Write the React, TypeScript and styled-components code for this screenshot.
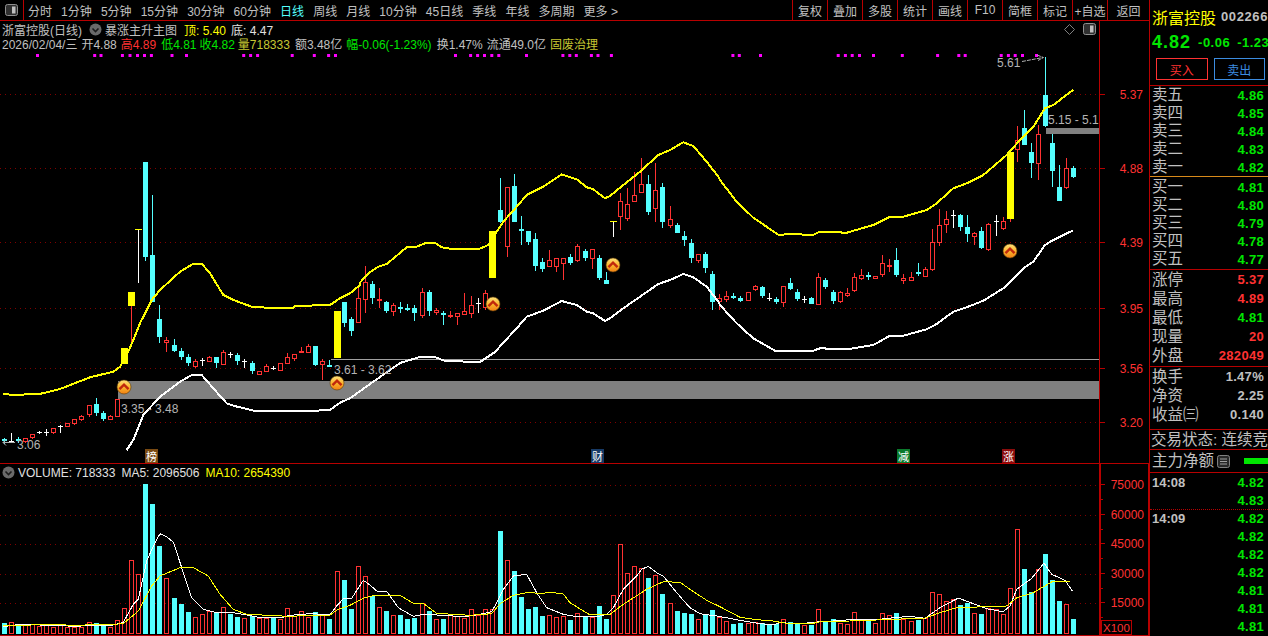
import React from 'react'
import styled, { createGlobalStyle } from 'styled-components'

const RED_LINE = '#b80000'
const UP = '#ff3232'
const DOWN = '#54ffff'
const GREEN = '#00e600'
const GRAY = '#c0c0c0'
const YELLOW = '#ffff00'
const FONT = '"Liberation Sans", "Noto Sans CJK SC", sans-serif'

const STEP = 7.086
const barX = (i: number) => 3.5 + STEP * i

type Kind = 'r' | 'c' | 'w' | 'y' | 't'
type Row = [Kind, number, number, number, number]

// 3x crop readings, y = offset + value / 3
const scan = (offset: number, rows: Row[]): Row[] =>
    rows.map(([k, a, b, c, d]) => [k, offset + a / 3, offset + b / 3, offset + c / 3, offset + d / 3])

const candles: Row[] = [
    ...scan(260, [
        ['c', 538, 544, 533, 552], ['w', 543, 543, 520, 545], ['c', 537, 539, 530, 548], ['r', 533, 543, 533, 550],
        ['r', 521, 531, 521, 538], ['w', 518, 518, 512, 522], ['w', 518, 518, 507, 527], ['r', 503, 515, 503, 523],
        ['w', 500, 500, 494, 518], ['r', 488, 497, 488, 497], ['r', 476, 488, 476, 495], ['r', 469, 478, 465, 482],
        ['r', 436, 464, 436, 472], ['c', 433, 458, 414, 467], ['c', 459, 477, 452, 483], ['r', 469, 478, 465, 480],
        ['r', 418, 470, 418, 472], ['y', 264, 312, 264, 312], ['y', 96, 138, 96, 262],
    ]),
    ...scan(60, [
        ['t', 511, 511, 511, 669], ['c', 306, 590, 306, 603], ['c', 585, 726, 405, 726],
    ]),
    ...scan(260, [
        ['c', 178, 230, 136, 250], ['r', 240, 247, 230, 276], ['c', 255, 273, 238, 275], ['c', 273, 290, 265, 300],
        ['c', 291, 309, 283, 318], ['r', 303, 318, 296, 325], ['w', 302, 302, 295, 318], ['r', 292, 303, 288, 307],
        ['c', 291, 309, 291, 323], ['r', 276, 312, 270, 315], ['w', 283, 283, 275, 295], ['c', 285, 303, 280, 315],
        ['w', 305, 305, 298, 325], ['c', 309, 332, 303, 342], ['r', 334, 344, 334, 344], ['r', 319, 334, 312, 337],
        ['w', 324, 324, 317, 331], ['r', 310, 330, 310, 330], ['r', 291, 310, 280, 312], ['r', 283, 295, 283, 303],
        ['r', 275, 275, 262, 280], ['r', 258, 275, 252, 280], ['c', 258, 315, 258, 318], ['r', 304, 312, 296, 360],
        ['c', 316, 316, 300, 316], ['y', 152, 293, 152, 293], ['c', 127, 190, 127, 200], ['c', 178, 213, 172, 228],
        ['r', 115, 186, 85, 190],
    ]),
    ...scan(140, [
        ['r', 425, 475, 378, 518], ['c', 432, 473, 422, 492], ['r', 477, 477, 444, 505], ['c', 487, 513, 483, 518],
        ['r', 496, 515, 490, 527], ['c', 503, 503, 487, 518], ['c', 505, 510, 492, 514], ['c', 504, 518, 495, 542],
        ['r', 457, 527, 445, 535], ['c', 456, 513, 450, 527], ['r', 511, 516, 504, 525], ['c', 520, 523, 513, 555],
        ['r', 526, 526, 513, 535], ['r', 520, 528, 520, 555], ['r', 512, 520, 460, 520], ['r', 496, 520, 468, 533],
        ['w', 490, 490, 475, 518], ['r', 460, 503, 450, 510], ['y', 273, 413, 273, 413], ['c', 210, 247, 113, 250],
        ['r', 142, 319, 142, 350], ['c', 138, 246, 102, 246], ['c', 267, 267, 228, 314], ['c', 273, 305, 273, 315],
        ['c', 297, 377, 280, 392], ['c', 366, 387, 354, 395], ['r', 361, 379, 330, 380], ['r', 355, 380, 355, 395],
        ['r', 355, 371, 355, 420], ['c', 351, 369, 342, 376], ['r', 319, 361, 312, 365], ['c', 333, 354, 327, 364],
        ['r', 328, 356, 328, 387], ['c', 354, 413, 345, 420], ['c', 420, 431, 397, 431], ['t', 247, 247, 247, 290],
        ['r', 184, 230, 158, 270], ['r', 193, 236, 145, 243], ['r', 166, 185, 97, 185], ['r', 133, 158, 55, 158],
        ['c', 132, 216, 105, 225], ['r', 151, 206, 70, 245], ['c', 141, 246, 130, 264], ['r', 238, 257, 198, 263],
        ['c', 255, 278, 248, 278], ['c', 288, 300, 273, 318], ['c', 309, 354, 298, 368], ['r', 343, 362, 343, 368],
        ['c', 342, 384, 336, 400], ['c', 402, 485, 394, 510], ['r', 475, 484, 463, 510],
    ]),
    ...scan(40, [
        ['r', 768, 778, 754, 785], ['c', 769, 773, 760, 777], ['c', 774, 783, 767, 787], ['r', 757, 780, 755, 783],
        ['r', 739, 748, 735, 752], ['c', 741, 768, 738, 773], ['w', 774, 774, 760, 783], ['c', 778, 787, 770, 792],
        ['r', 739, 787, 737, 800], ['c', 730, 747, 714, 750], ['c', 756, 777, 748, 783], ['w', 778, 778, 768, 788],
        ['c', 775, 792, 770, 793], ['r', 712, 793, 700, 795], ['c', 721, 741, 715, 748], ['c', 756, 783, 750, 792],
        ['r', 757, 784, 752, 790], ['r', 760, 767, 745, 772], ['r', 712, 751, 700, 755], ['r', 705, 713, 688, 720],
        ['c', 707, 707, 695, 720], ['r', 707, 712, 707, 712], ['r', 670, 703, 645, 710], ['r', 677, 677, 658, 695],
        ['c', 660, 705, 625, 710], ['r', 715, 722, 702, 732], ['r', 712, 722, 697, 722], ['c', 698, 698, 670, 708],
        ['r', 688, 708, 682, 710], ['r', 607, 689, 568, 692], ['r', 556, 608, 508, 617], ['r', 538, 553, 514, 580],
        ['w', 525, 525, 511, 563], ['c', 525, 561, 522, 573], ['c', 561, 581, 526, 606], ['r', 580, 590, 576, 615],
        ['c', 573, 625, 562, 627], ['r', 552, 627, 550, 632], ['w', 543, 543, 525, 587], ['r', 544, 565, 530, 570],
        ['y', 337, 537, 337, 545], ['r', 300, 326, 258, 365], ['c', 265, 315, 210, 315], ['c', 336, 369, 308, 414],
        ['r', 283, 369, 256, 420], ['c', 165, 257, 52, 262], ['c', 309, 392, 282, 441], ['c', 442, 483, 375, 483],
        ['r', 385, 441, 354, 447], ['c', 384, 411, 378, 413],
    ]),
]

const volumeBars: ['c' | 'r', number][] = [
    ['c', 485], ['r', 484], ['c', 490], ['r', 490], ['r', 490], ['r', 495], ['r', 490], ['r', 498], ['r', 492], ['r', 497],
    ['r', 498], ['r', 498], ['r', 484], ['c', 487], ['c', 493], ['r', 498], ['r', 478], ['r', 442], ['r', 298], ['r', 340],
    ['c', 69], ['c', 129], ['c', 255], ['r', 352], ['c', 411], ['c', 429], ['c', 453], ['r', 469], ['r', 460], ['r', 451],
    ['c', 457], ['r', 439], ['c', 459], ['c', 468], ['r', 472], ['c', 465], ['r', 470], ['r', 470], ['c', 472], ['r', 474],
    ['r', 442], ['r', 466], ['r', 451], ['r', 468], ['c', 454], ['r', 463], ['c', 474], ['r', 331], ['c', 357], ['c', 444],
    ['r', 316], ['r', 346], ['c', 406], ['r', 439], ['c', 450], ['r', 463], ['c', 462], ['c', 474], ['c', 471], ['r', 427],
    ['c', 451], ['r', 475], ['c', 474], ['r', 463], ['r', 466], ['r', 470], ['r', 445], ['r', 463], ['r', 445], ['r', 445],
    ['c', 210], ['r', 298], ['c', 330], ['c', 408], ['c', 444], ['c', 438], ['c', 465], ['r', 463], ['r', 469], ['r', 466],
    ['c', 477], ['r', 457], ['c', 465], ['r', 469], ['c', 435], ['c', 474], ['r', 403], ['r', 250], ['r', 337], ['r', 316],
    ['r', 322], ['c', 351], ['r', 342], ['c', 399], ['r', 427], ['c', 450], ['c', 456], ['c', 459], ['r', 475], ['c', 462],
    ['c', 447], ['r', 469], ['r', 481], ['c', 490], ['c', 486], ['r', 486], ['r', 484], ['c', 487], ['c', 491], ['c', 490],
    ['r', 475], ['c', 483], ['c', 489], ['r', 492], ['c', 491], ['r', 445], ['c', 484], ['c', 474], ['r', 486], ['r', 490],
    ['r', 454], ['r', 478], ['c', 478], ['r', 486], ['r', 457], ['r', 463], ['c', 456], ['r', 475], ['r', 481], ['c', 477],
    ['r', 472], ['r', 393], ['r', 400], ['r', 421], ['r', 415], ['c', 432], ['c', 425], ['r', 457], ['c', 459], ['r', 442],
    ['r', 445], ['r', 460], ['r', 381], ['r', 205], ['c', 324], ['c', 393], ['r', 325], ['c', 279], ['c', 357], ['c', 420],
    ['r', 430], ['c', 474],
]

type P = [number, number]
const path = (ox: number, oy: number, list: P[]) =>
    list.map(([x, y]) => `${(ox + x / 3).toFixed(1)},${(oy + y / 3).toFixed(1)}`).join(' ')

const upperBand = [
    path(0, 260, [[10, 401], [30, 404], [115, 403], [180, 387], [270, 352], [340, 335], [360, 320], [385, 275], [400, 240], [420, 190], [455, 120], [480, 90], [540, 35], [580, 11], [605, 11], [630, 40], [670, 105], [700, 120], [755, 140], [800, 143], [880, 143], [885, 138], [990, 135], [1020, 115], [1050, 100], [1080, 75]]),
    path(360, 140, [[0, 428], [25, 400], [55, 380], [80, 372], [140, 322], [170, 320], [200, 308], [225, 308], [245, 322], [280, 328], [355, 328], [385, 315], [400, 290], [430, 245], [470, 200], [500, 165], [550, 140], [605, 103], [650, 118], [680, 142], [700, 148], [735, 175], [750, 168], [790, 135], [840, 95], [895, 45], [930, 30], [970, 7], [1000, 18], [1040, 65], [1075, 110]]),
    path(720, 40, [[0, 420], [50, 485], [100, 533], [175, 584], [210, 583], [280, 584], [300, 575], [380, 578], [460, 555], [510, 530], [550, 530], [620, 510], [650, 490], [700, 445], [740, 430], [790, 405], [860, 345], [900, 300], [940, 260], [975, 205], [1000, 195], [1060, 149]]),
].join(' ')

const lowerBand = [
    path(0, 260, [[380, 570], [400, 540], [430, 465], [480, 410], [540, 365], [575, 345], [605, 345], [640, 385], [680, 430], [700, 437], [765, 453], [925, 453], [990, 450], [1020, 428], [1050, 415], [1110, 372]]),
    '400,363 420,357 435,357 445,361 480,362 495,352',
    path(360, 140, [[440, 597], [470, 565], [500, 530], [550, 512], [605, 483], [650, 495], [680, 515], [700, 520], [735, 543], [750, 535], [790, 505], [840, 470], [895, 432], [930, 420], [970, 402], [1000, 412], [1040, 440], [1075, 485]]),
    path(720, 40, [[0, 795], [50, 850], [100, 895], [165, 932], [280, 932], [300, 925], [380, 928], [460, 915], [510, 887], [550, 887], [620, 868], [650, 852], [700, 815], [740, 802], [790, 782], [850, 745], [910, 685], [940, 665], [975, 615], [1000, 600], [1060, 571]]),
].join(' ')

const ma5 = [
    path(0, 460, [[10, 497], [60, 490], [100, 490], [140, 494], [180, 492], [220, 497], [280, 492], [340, 492], [370, 484], [400, 430], [415, 415], [440, 300], [460, 255], [480, 218], [500, 228], [520, 243], [545, 320], [575, 410], [610, 445], [650, 455], [700, 455], [740, 462], [770, 468], [810, 470], [845, 470], [860, 465], [900, 460], [940, 458], [990, 462], [1010, 435], [1030, 413], [1055, 412], [1090, 358]]),
    path(370, 460, [[0, 372], [20, 390], [50, 391], [85, 440], [130, 466], [160, 460], [240, 464], [280, 468], [330, 460], [365, 452], [380, 425], [400, 385], [430, 345], [470, 340], [500, 395], [530, 440], [580, 460], [620, 467], [680, 467], [710, 460], [730, 440], [760, 385], [800, 345], [815, 325], [835, 316], [860, 335], [880, 345], [920, 395], [960, 440], [990, 458], [1040, 465]]),
    path(740, 460, [[0, 478], [30, 483], [60, 488], [100, 491], [120, 485], [180, 488], [230, 483], [280, 480], [330, 476], [410, 476], [460, 470], [510, 466], [555, 472], [600, 440], [655, 411], [700, 428], [740, 443], [790, 452], [810, 435], [830, 385], [875, 352], [912, 306], [935, 340], [975, 358], [997, 390]]),
].join(' ')

const ma10 = [
    path(0, 460, [[10, 495], [150, 490], [220, 493], [340, 490], [370, 488], [415, 450], [455, 375], [480, 345], [540, 320], [580, 320], [625, 345], [660, 400], [700, 445], [740, 460], [830, 464], [860, 466], [990, 462], [1015, 445], [1050, 433], [1090, 412]]),
    path(370, 460, [[0, 406], [20, 403], [90, 403], [130, 427], [160, 427], [200, 457], [300, 463], [365, 458], [390, 428], [430, 403], [470, 395], [520, 397], [540, 394], [580, 399], [600, 425], [660, 462], [720, 460], [760, 430], [830, 385], [880, 362], [930, 364], [960, 385], [1010, 418], [1050, 437]]),
    path(740, 460, [[0, 469], [50, 476], [100, 480], [120, 484], [150, 488], [220, 487], [240, 482], [330, 480], [410, 477], [555, 471], [600, 455], [650, 440], [740, 437], [800, 435], [830, 410], [880, 395], [940, 360], [990, 360]]),
].join(' ')

const magentaDots = [
    37.5, 94.7, 101, 122.4, 130, 137.5, 144.5, 151.4, 172, 186.5, 243.7, 250.6, 257.6, 292.2, 314.3, 328.6, 335.5, 455.5,
    470.6, 477.6, 484.5, 491.8, 498.8, 526.5, 562.9, 569.8, 576.3, 591.4, 598, 611.4, 732.9, 739.3, 760.5, 838.2, 845.4,
    852.2, 859.5, 873.5, 902.3, 937.6, 958.8, 965.2, 1001.2, 1008.4, 1015.2, 1022.5, 1036.5,
]

const priceGrid = [
    { y: 94, label: '5.37' }, { y: 168, label: '4.88' }, { y: 242, label: '4.39' },
    { y: 308, label: '3.95' }, { y: 368, label: '3.56' }, { y: 422, label: '3.20' },
]
const volumeGrid = [
    { y: 484, label: '75000' }, { y: 514, label: '60000' }, { y: 543, label: '45000' },
    { y: 573, label: '30000' }, { y: 602, label: '15000' },
]
const signals: P[] = [[124, 387], [337, 383], [493, 304], [613, 265], [1010, 251]]
const tags = [
    { x: 145, text: '榜', color: '#7a4a12' }, { x: 591, text: '财', color: '#173a66' },
    { x: 897, text: '减', color: '#0a7a2c' }, { x: 1002, text: '涨', color: '#8a0c0c' },
]

const periods = ['分时', '1分钟', '5分钟', '15分钟', '30分钟', '60分钟', '日线', '周线', '月线', '10分钟', '45日线', '季线', '年线', '多周期', '更多 >']
const tools = ['复权', '叠加', '多股', '统计', '画线', 'F10', '简框', '标记', '+自选', '返回']

const sells = [['卖五', '4.86'], ['卖四', '4.85'], ['卖三', '4.84'], ['卖二', '4.83'], ['卖一', '4.82']]
const buys = [['买一', '4.81'], ['买二', '4.80'], ['买三', '4.79'], ['买四', '4.78'], ['买五', '4.77']]
const limits = [
    ['涨停', '5.37', UP], ['最高', '4.89', UP], ['最低', '4.81', GREEN], ['现量', '20', UP], ['外盘', '282049', UP],
]
const stats = [['换手', '1.47%'], ['净资', '2.25'], ['收益㈢', '0.140']]
const ticks = [
    ['14:08', '4.82'], ['', '4.83'], ['14:09', '4.82'], ['', '4.82'], ['', '4.82'],
    ['', '4.82'], ['', '4.81'], ['', '4.81'], ['', '4.81'],
]

const PanelToggleIcon = () => (
    <svg width="13" height="12" viewBox="0 0 13 12">
        <rect x="0.5" y="0.5" width="12" height="11" rx="2" fill="#303030" stroke="#909090" />
        <rect x="7" y="2.5" width="3.5" height="7" fill="#c0c0c0" />
    </svg>
)

const CollapseIcon = () => (
    <svg width="13" height="13" viewBox="0 0 13 13">
        <circle cx="6.5" cy="6.5" r="6" fill="#6a6a6a" />
        <path d="M3.5 5.5 L6.5 8.5 L9.5 5.5" fill="none" stroke="#1c1c1c" strokeWidth="1.6" />
    </svg>
)

const DiamondIcon = () => (
    <svg width="11" height="11" viewBox="0 0 11 11">
        <path d="M5.5 0.5 L10.5 5.5 L5.5 10.5 L0.5 5.5 Z" fill="none" stroke="#808080" />
    </svg>
)

const ListIcon = () => (
    <svg width="13" height="13" viewBox="0 0 13 13">
        <rect x="0.5" y="0.5" width="12" height="12" rx="2" fill="#282828" stroke="#808080" />
        <path d="M3 4 H10 M3 6.5 H10 M3 9 H10" stroke="#a0a0a0" />
    </svg>
)

const Candle = ({ row, i }: { row: Row; i: number }) => {
    const [kind, top, bottom, wickTop, wickBottom] = row
    const x = Math.round(barX(i))
    if (kind === 'y') {
        return (
            <g>
                <line x1={x + 0.5} x2={x + 0.5} y1={top} y2={wickBottom} stroke={UP} />
                <rect x={x - 3} y={top} width={7} height={bottom - top} fill={YELLOW} />
            </g>
        )
    }
    if (kind === 't') {
        return (
            <g>
                <line x1={x + 0.5} x2={x + 0.5} y1={wickTop} y2={wickBottom} stroke="#ffffff" />
                <rect x={x - 3} y={top - 1} width={7} height={1} fill={YELLOW} />
            </g>
        )
    }
    const color = kind === 'r' ? UP : kind === 'c' ? DOWN : '#ffffff'
    const flat = bottom - top < 1.5
    return (
        <g>
            <line x1={x + 0.5} x2={x + 0.5} y1={wickTop} y2={wickBottom} stroke={color} />
            {flat ? (
                <rect x={x - 2} y={top - 0.5} width={5} height={kind === 'w' ? 1 : 2} fill={color} />
            ) : kind === 'r' ? (
                <rect x={x - 2 + 0.5} y={Math.round(top) + 0.5} width={4} height={Math.round(bottom - top)} fill="#000" stroke={UP} />
            ) : (
                <rect x={x - 2} y={top} width={5} height={bottom - top} fill={color} />
            )}
        </g>
    )
}

const SignalBadge = ({ x, y }: { x: number; y: number }) => (
    <g>
        <circle cx={x} cy={y} r={7} fill="url(#badge)" stroke="#5a3a08" strokeWidth="0.6" />
        <path d={`M${x - 4.5} ${y + 2.2} L${x} ${y - 2.4} L${x + 4.5} ${y + 2.2}`} fill="none" stroke="#c0280c" strokeWidth="2.4" />
    </g>
)

const App = () => {
    return (
        <>
            <GlobalStyle />
            <Shell>
                <Workspace>
                    <Toolbar>
                        <ToggleCell><PanelToggleIcon /></ToggleCell>
                        <Periods>
                            {periods.map((p) => (
                                <PeriodItem key={p} $active={p === '日线'}>{p}</PeriodItem>
                            ))}
                        </Periods>
                        <Tools>
                            {tools.map((t) => (
                                <ToolItem key={t}>{t}</ToolItem>
                            ))}
                        </Tools>
                    </Toolbar>

                    <MainRow>
                        <ChartColumn>
                            <TitleRow>
                                <Field>浙富控股(日线)</Field>
                                <IconSlot><CollapseIcon /></IconSlot>
                                <Field>暴涨主升主图</Field>
                                <Field $color={YELLOW} $gap={7}>顶: 5.40</Field>
                                <Field $color="#e0e0e0" $gap={5}>底: 4.47</Field>
                                <TitleIcons>
                                    <DiamondIcon />
                                    <PanelToggleIcon />
                                </TitleIcons>
                            </TitleRow>
                            <QuoteRow>
                                <Field>2026/02/04/三</Field>
                                <Field $gap={4}>开4.88</Field>
                                <Field $color={UP} $gap={4}>高4.89</Field>
                                <Field $color={GREEN} $gap={5}>低4.81</Field>
                                <Field $color={GREEN} $gap={3}>收4.82</Field>
                                <Field $color="#c8c832" $gap={3}>量718333</Field>
                                <Field $gap={5}>额3.48亿</Field>
                                <Field $color={GREEN} $gap={4}>幅-0.06(-1.23%)</Field>
                                <Field $gap={5}>换1.47%</Field>
                                <Field $gap={4}>流通49.0亿</Field>
                                <Field $color="#c8c832" $gap={4}>固废治理</Field>
                            </QuoteRow>
                            <PriceChart width={1099} height={414} viewBox="0 49 1099 414">
                                <defs>
                                    <linearGradient id="badge" x1="0" y1="0" x2="0" y2="1">
                                        <stop offset="0" stopColor="#ffe27a" />
                                        <stop offset="0.5" stopColor="#fbb52e" />
                                        <stop offset="1" stopColor="#f07f12" />
                                    </linearGradient>
                                </defs>
                                {priceGrid.map((g) => (
                                    <GridLine key={g.y} x1={0} x2={1099} y1={g.y + 0.5} y2={g.y + 0.5} />
                                ))}
                                {magentaDots.map((x) => (
                                    <rect key={x} x={x - 1.5} y={54} width={3} height={3} fill="#ff00ff" />
                                ))}
                                <rect x={118} y={381} width={981} height={18} fill="#808080" />
                                <rect x={1046} y={128} width={53} height={6} fill="#808080" />
                                <line x1={331} x2={1099} y1={359.5} y2={359.5} stroke="#a0a0a0" />
                                <g shapeRendering="crispEdges">
                                    {candles.map((row, i) => (
                                        <Candle key={i} row={row} i={i} />
                                    ))}
                                    <polyline points={upperBand} fill="none" stroke={YELLOW} strokeWidth="2" />
                                    <polyline points={lowerBand} fill="none" stroke="#ffffff" strokeWidth="2" />
                                </g>
                                {signals.map(([x, y]) => (
                                    <SignalBadge key={x} x={x} y={y} />
                                ))}
                                <ChartLabel x={121} y={413}>3.35 - 3.48</ChartLabel>
                                <ChartLabel x={334} y={374}>3.61 - 3.62</ChartLabel>
                                <ChartLabel x={1048} y={124}>5.15 - 5.1</ChartLabel>
                                <ChartLabel x={997} y={67}>5.61</ChartLabel>
                                <ChartLabel x={17} y={449}>3.06</ChartLabel>
                                <path d="M1022 61.5 L1043 57.5 M1037 55 L1043.5 57.5 L1038 60.5" fill="none" stroke="#b0b0b0" strokeDasharray="4 1" />
                                <path d="M15 442.5 L3 442.5 M6 439.5 L3 442.5 L6 445.5" fill="none" stroke="#b0b0b0" />
                                {tags.map((t) => (
                                    <g key={t.x}>
                                        <rect x={t.x} y={449} width={13} height={14} fill={t.color} />
                                        <TagText x={t.x + 6.5} y={460.5}>{t.text}</TagText>
                                    </g>
                                ))}
                            </PriceChart>
                        </ChartColumn>
                        <AxisColumn>
                            <svg width="49" height="442" viewBox="1100 21 49 442">
                                {priceGrid.map((g) => (
                                    <g key={g.y}>
                                        <line x1={1100} x2={1105} y1={g.y + 0.5} y2={g.y + 0.5} stroke={RED_LINE} />
                                        <AxisLabel x={1143} y={g.y + 5}>{g.label}</AxisLabel>
                                    </g>
                                ))}
                            </svg>
                        </AxisColumn>
                    </MainRow>

                    <VolumeRow>
                        <ChartColumn>
                            <VolumeHeader>
                                <CollapseIcon />
                                <VolumeText>VOLUME: 718333</VolumeText>
                                <VolumeText $gap={6}>MA5: 2096506</VolumeText>
                                <VolumeText $gap={6} $color={YELLOW}>MA10: 2654390</VolumeText>
                            </VolumeHeader>
                            <svg width="1099" height="154" viewBox="0 480 1099 154">
                                {volumeGrid.map((g) => (
                                    <GridLine key={g.y} x1={0} x2={1099} y1={g.y + 0.5} y2={g.y + 0.5} />
                                ))}
                                <g shapeRendering="crispEdges">
                                    {volumeBars.map(([kind, top], i) => {
                                        const x = Math.round(barX(i)) - 2
                                        const y = Math.round(460 + top / 3)
                                        return kind === 'c' ? (
                                            <rect key={i} x={x} y={y} width={5} height={633 - y} fill={DOWN} />
                                        ) : (
                                            <rect key={i} x={x + 0.5} y={y + 0.5} width={4} height={632 - y} fill="none" stroke={UP} />
                                        )
                                    })}
                                    <polyline points={ma5} fill="none" stroke="#ffffff" />
                                    <polyline points={ma10} fill="none" stroke={YELLOW} />
                                </g>
                            </svg>
                        </ChartColumn>
                        <VolumeAxis>
                            <svg width="47" height="171" viewBox="1101 464 47 171">
                                {volumeGrid.map((g) => (
                                    <g key={g.y}>
                                        <line x1={1101} x2={1105} y1={g.y + 0.5} y2={g.y + 0.5} stroke={RED_LINE} />
                                        <line x1={1101} x2={1103} y1={g.y + 15.5} y2={g.y + 15.5} stroke={RED_LINE} />
                                        <AxisLabel x={1144} y={g.y + 5}>{g.label}</AxisLabel>
                                    </g>
                                ))}
                                <rect x={1101.5} y={620.5} width={30} height={14} fill="none" stroke={RED_LINE} />
                                <ScaleLabel x={1103} y={632}>X100</ScaleLabel>
                            </svg>
                        </VolumeAxis>
                    </VolumeRow>
                </Workspace>

                <SidePanel>
                    <NameRow>
                        <StockName>浙富控股</StockName>
                        <StockCode>002266</StockCode>
                    </NameRow>
                    <PriceRow>
                        <LastPrice>4.82</LastPrice>
                        <Change>-0.06</Change>
                        <Change>-1.23</Change>
                    </PriceRow>
                    <TradeButtons>
                        <TradeButton $color={UP}>买入</TradeButton>
                        <TradeButton $color="#3c8ce0">卖出</TradeButton>
                    </TradeButtons>

                    <Section $height={91}>
                        {sells.map(([name, value]) => (
                            <QuoteLine key={name}>
                                <QuoteName>{name}</QuoteName>
                                <QuoteValue $color={GREEN}>{value}</QuoteValue>
                            </QuoteLine>
                        ))}
                    </Section>
                    <Section $height={93} $color="#d88a1a" $pad={1}>
                        {buys.map(([name, value]) => (
                            <QuoteLine key={name}>
                                <QuoteName>{name}</QuoteName>
                                <QuoteValue $color={GREEN}>{value}</QuoteValue>
                            </QuoteLine>
                        ))}
                    </Section>
                    <Section $height={97}>
                        {limits.map(([name, value, color]) => (
                            <QuoteLine key={name} $height={19}>
                                <QuoteName>{name}</QuoteName>
                                <QuoteValue $color={color}>{value}</QuoteValue>
                            </QuoteLine>
                        ))}
                    </Section>
                    <Section $height={63}>
                        {stats.map(([name, value]) => (
                            <QuoteLine key={name} $height={19}>
                                <QuoteName>{name}</QuoteName>
                                <QuoteValue $color={GRAY}>{value}</QuoteValue>
                            </QuoteLine>
                        ))}
                    </Section>
                    <Section $height={20}>
                        <StatusText>交易状态: 连续竞</StatusText>
                    </Section>
                    <Section $height={23}>
                        <NetRow>
                            <QuoteName>主力净额</QuoteName>
                            <ListIcon />
                            <NetBar />
                        </NetRow>
                    </Section>
                    <Section $height={163}>
                        {ticks.map(([time, value], i) => (
                            <TickLine key={i} $dotted={i === 2}>
                                <TickTime>{time}</TickTime>
                                <QuoteValue $color={GREEN}>{value}</QuoteValue>
                            </TickLine>
                        ))}
                    </Section>
                </SidePanel>
            </Shell>
        </>
    )
}

const GlobalStyle = createGlobalStyle`
    html, body {
        margin: 0;
        padding: 0;
        background: #000;
    }
    * {
        box-sizing: border-box;
    }
    svg {
        display: block;
    }
`

const Shell = styled.div`
    display: flex;
    width: 1268px;
    height: 636px;
    overflow: hidden;
    background: #000;
    color: ${GRAY};
    font-family: ${FONT};
    font-size: 12px;
    white-space: nowrap;
`

const Workspace = styled.div`
    display: flex;
    flex-direction: column;
    width: 1149px;
    flex: none;
`

const Toolbar = styled.div`
    display: flex;
    align-items: stretch;
    height: 21px;
    flex: none;
    border-bottom: 1px solid ${RED_LINE};
`

const ToggleCell = styled.div`
    display: flex;
    align-items: center;
    justify-content: center;
    width: 24px;
    border-right: 1px solid ${RED_LINE};
`

const Periods = styled.div`
    display: flex;
    align-items: center;
    gap: 9.1px;
    padding-left: 4px;
    flex: 1;
`

const PeriodItem = styled.span<{ $active?: boolean }>`
    color: ${({ $active }) => ($active ? '#54ffff' : GRAY)};
`

const Tools = styled.div`
    display: flex;
`

const ToolItem = styled.div`
    display: flex;
    align-items: center;
    justify-content: center;
    width: 35px;
    border-left: 1px solid ${RED_LINE};
    &:last-child {
        width: 42px;
    }
`

const MainRow = styled.div`
    display: flex;
    height: 442px;
    flex: none;
`

const ChartColumn = styled.div`
    display: flex;
    flex-direction: column;
    width: 1099px;
    flex: none;
`

const TitleRow = styled.div`
    display: flex;
    align-items: center;
    height: 16px;
    padding-left: 2px;
`

const QuoteRow = styled.div`
    display: flex;
    align-items: center;
    height: 12px;
    padding-left: 2px;
`

const Field = styled.span<{ $color?: string; $gap?: number }>`
    color: ${({ $color }) => $color || GRAY};
    margin-left: ${({ $gap }) => $gap || 0}px;
`

const IconSlot = styled.span`
    display: flex;
    margin: 0 3px 0 7px;
`

const TitleIcons = styled.div`
    display: flex;
    align-items: center;
    gap: 8px;
    margin-left: auto;
    padding-right: 3px;
`

const PriceChart = styled.svg`
    flex: none;
`

const GridLine = styled.line`
    stroke: #800000;
    stroke-dasharray: 1 4;
    shape-rendering: crispEdges;
`

const ChartLabel = styled.text`
    fill: #b4b4b4;
    font-size: 12px;
`

const TagText = styled.text`
    fill: #ffffff;
    font-size: 11px;
    text-anchor: middle;
`

const AxisColumn = styled.div`
    width: 50px;
    border-left: 1px solid ${RED_LINE};
`

const AxisLabel = styled.text`
    fill: ${UP};
    font-size: 12px;
    text-anchor: end;
`

const ScaleLabel = styled.text`
    fill: ${UP};
    font-size: 11.5px;
`

const VolumeRow = styled.div`
    display: flex;
    height: 173px;
    flex: none;
    border-top: 1px solid ${RED_LINE};
    border-bottom: 1px solid ${RED_LINE};
`

const VolumeHeader = styled.div`
    display: flex;
    align-items: center;
    height: 17px;
    padding-left: 2px;
`

const VolumeText = styled.span<{ $color?: string; $gap?: number }>`
    color: ${({ $color }) => $color || '#e0e0e0'};
    margin-left: ${({ $gap }) => $gap || 3}px;
`

const VolumeAxis = styled.div`
    width: 50px;
    border-left: 2px solid ${RED_LINE};
    border-right: 1px solid ${RED_LINE};
`

const SidePanel = styled.div`
    display: flex;
    flex-direction: column;
    width: 119px;
    flex: none;
    border-left: 1px solid ${RED_LINE};
    overflow: hidden;
`

const NameRow = styled.div`
    display: flex;
    align-items: center;
    gap: 5px;
    height: 33px;
    padding-left: 2px;
`

const StockName = styled.span`
    color: ${YELLOW};
    font-size: 16px;
`

const StockCode = styled.span`
    color: ${GRAY};
    font-size: 13px;
    font-weight: 700;
    letter-spacing: 0.6px;
`

const PriceRow = styled.div`
    display: flex;
    align-items: center;
    gap: 7px;
    height: 19px;
    padding-left: 2px;
`

const LastPrice = styled.span`
    color: ${GREEN};
    font-size: 18px;
    font-weight: 700;
    letter-spacing: 1px;
`

const Change = styled.span`
    color: ${GREEN};
    font-size: 13px;
    font-weight: 700;
    letter-spacing: 0.5px;
`

const TradeButtons = styled.div`
    display: flex;
    gap: 6px;
    height: 33px;
    padding: 6px 0 5px 6px;
`

const TradeButton = styled.div<{ $color: string }>`
    display: flex;
    align-items: center;
    justify-content: center;
    width: 51.5px;
    border: 1px solid ${({ $color }) => $color};
    color: ${({ $color }) => $color};
`

const Section = styled.div<{ $height: number; $color?: string; $pad?: number }>`
    height: ${({ $height }) => $height}px;
    flex: none;
    border-top: 1px solid ${({ $color }) => $color || RED_LINE};
    padding-top: ${({ $pad }) => $pad || 0}px;
`

const QuoteLine = styled.div<{ $height?: number }>`
    display: flex;
    align-items: center;
    justify-content: space-between;
    height: ${({ $height }) => $height || 18}px;
    padding: 0 4px 0 2px;
`

const QuoteName = styled.span`
    font-size: 15.5px;
    line-height: 1;
`

const QuoteValue = styled.span<{ $color: string }>`
    color: ${({ $color }) => $color};
    font-size: 13px;
    font-weight: 700;
    letter-spacing: 0.3px;
`

const StatusText = styled.div`
    padding-left: 1px;
    font-size: 15.5px;
    line-height: 19px;
`

const NetRow = styled.div`
    display: flex;
    align-items: center;
    gap: 3px;
    height: 22px;
    padding-left: 2px;
`

const NetBar = styled.div`
    width: 24px;
    height: 6px;
    margin-left: auto;
    background: ${GREEN};
`

const TickLine = styled.div<{ $dotted?: boolean }>`
    display: flex;
    align-items: center;
    justify-content: space-between;
    height: 18px;
    padding: 0 4px 0 2px;
    ${({ $dotted }) => $dotted && `border-top: 1px dotted ${RED_LINE};`}
`

const TickTime = styled.span`
    color: ${GRAY};
    font-size: 13px;
    font-weight: 700;
`

export default App
